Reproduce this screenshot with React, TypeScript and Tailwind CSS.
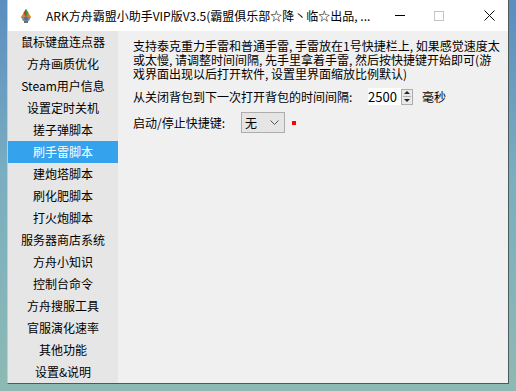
const items = [
  '鼠标键盘连点器',
  '方舟画质优化',
  'Steam用户信息',
  '设置定时关机',
  '搓子弹脚本',
  '刷手雷脚本',
  '建炮塔脚本',
  '刷化肥脚本',
  '打火炮脚本',
  '服务器商店系统',
  '方舟小知识',
  '控制台命令',
  '方舟搜服工具',
  '官服演化速率',
  '其他功能',
  '设置&说明',
]

const font = { fontFamily: '"Noto Sans CJK SC", "Liberation Sans", sans-serif' }

function AppIcon() {
  return (
    <svg width="16" height="16" viewBox="0 0 16 16">
      <path d="M8 1 L3 9 L13 9 Z" fill="#d9822b" />
      <path d="M8 1 L5.5 5 L8 9 Z" fill="#c0392b" />
      <path d="M8 1 L10.5 5 L8 9 Z" fill="#3a9a3a" />
      <path d="M3 9 L13 9 L11 13 L5 13 Z" fill="#8a8a8a" />
      <circle cx="8" cy="10.5" r="2" fill="#4a6fb5" />
      <rect x="6" y="13" width="4" height="2" fill="#6b6b6b" />
    </svg>
  )
}

export default function App() {
  return (
    <div
      className="flex h-[391px] w-[516px] overflow-hidden bg-[linear-gradient(180deg,#5b8dbf_0%,#7aaec0_45%,#8cbab3_100%)] pb-[7px] pl-[7px] pr-[7px]"
      style={font}
    >
      <div className="flex flex-1 flex-col border-r border-b border-[#4d5a5a] border-l border-l-[#c9c9c9]">
        {/* title bar */}
        <div className="flex h-[31px] shrink-0 items-center bg-white">
          <div className="ml-[10px] flex w-[16px] shrink-0 items-center">
            <AppIcon />
          </div>
          <span className="ml-[12px] min-w-0 whitespace-nowrap text-[12px] text-black">
            ARK方舟霸盟小助手VIP版V3.5(霸盟俱乐部☆降丶临☆出品, ...
          </span>
          <div className="ml-auto flex h-full shrink-0 items-center">
            <div className="flex h-full w-[16px] items-center justify-center">
              <div className="h-px w-[10px] bg-black" />
            </div>
            <div className="flex h-full w-[62px] items-center justify-center">
              <div className="h-[10px] w-[10px] border border-[#c4c4c4]" />
            </div>
            <div className="flex h-full w-[38px] items-center justify-center">
              <svg width="11" height="11" viewBox="0 0 11 11">
                <path d="M0.5 0.5 L10.5 10.5 M10.5 0.5 L0.5 10.5" stroke="#111" strokeWidth="1" />
              </svg>
            </div>
          </div>
        </div>
        {/* body */}
        <div className="flex flex-1">
          <div className="flex w-[110px] flex-col bg-[#e6e6e6]">
            {items.map((item) => (
              <div
                key={item}
                className={`flex h-[22px] items-center justify-center whitespace-nowrap text-[12px] ${
                  item === '刷手雷脚本' ? 'bg-[#35a2ee] text-white' : 'text-black'
                }`}
              >
                {item}
              </div>
            ))}
          </div>
          <div className="flex-1 bg-[#f0f0f0] pl-[15px] pt-[8px] text-[12px] text-black">
            <div className="leading-[14px] whitespace-nowrap">
              <div>支持泰克重力手雷和普通手雷, 手雷放在1号快捷栏上, 如果感觉速度太</div>
              <div>或太慢, 请调整时间间隔, 先手里拿着手雷, 然后按快捷键开始即可(游</div>
              <div>戏界面出现以后打开软件, 设置里界面缩放比例默认)</div>
            </div>
            <div className="mt-[7px] flex h-[17px] items-center">
              <span className="w-[235px] whitespace-nowrap">从关闭背包到下一次打开背包的时间间隔:</span>
              <div className="flex h-[17px] w-[33px] items-center bg-white">
                <span className="text-[13px] leading-none">2500</span>
              </div>
              <div className="flex h-[16px] w-[12px] flex-col items-center justify-center gap-[2px] border border-[#adadad] bg-[#e9e9e9]">
                <svg width="6" height="3" viewBox="0 0 6 3">
                  <path d="M0 3 L3 0 L6 3 Z" fill="#222" />
                </svg>
                <div className="h-px w-[8px] bg-[#adadad]" />
                <svg width="6" height="3" viewBox="0 0 6 3">
                  <path d="M0 0 L3 3 L6 0 Z" fill="#222" />
                </svg>
              </div>
              <span className="ml-[9px]">毫秒</span>
            </div>
            <div className="mt-[7px] flex h-[21px] items-center">
              <span className="w-[108px] whitespace-nowrap">启动/停止快捷键:</span>
              <div className="flex h-[21px] w-[44px] items-center border border-[#adadad] bg-[#e5e5e5] pl-[3px] pr-[5px]">
                <span>无</span>
                <svg className="ml-auto" width="9" height="5" viewBox="0 0 9 5">
                  <path d="M0.5 0.5 L4.5 4.5 L8.5 0.5" stroke="#555" fill="none" strokeWidth="1" />
                </svg>
              </div>
              <div className="ml-[7px] h-[4px] w-[4px] bg-[#ff0000]" />
            </div>
          </div>
        </div>
      </div>
    </div>
  )
}
